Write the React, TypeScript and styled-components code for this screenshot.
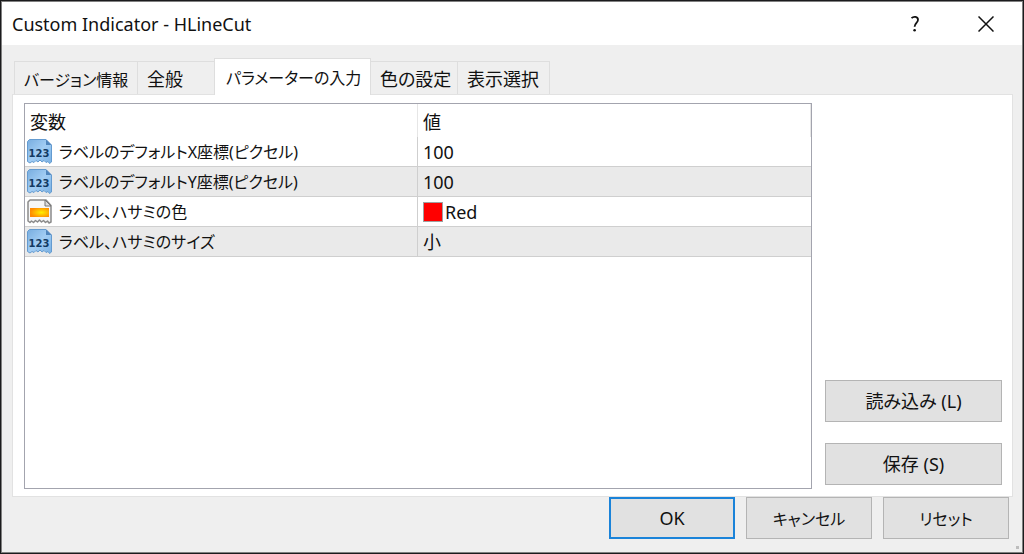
import React, { useState } from "react";
import styled, { createGlobalStyle } from "styled-components";

const GlobalStyle = createGlobalStyle`
  *, *::before, *::after { box-sizing: border-box; }
  html, body { margin: 0; padding: 0; }
  body, button {
    font-family: "Noto Sans", "Noto Sans CJK JP", sans-serif;
    font-size: 18px;
    line-height: 24px;
    font-feature-settings: "palt";
    color: #111;
  }
`;

const Dialog = styled.main`
  display: flex;
  flex-direction: column;
  min-height: 100vh;
  padding: 1px;
  background: #efefef;
  border: 1px solid #1b1b1d;
  outline: 1px solid #808080;
  outline-offset: -2px;
`;

const TitleBar = styled.header`
  display: flex;
  align-items: center;
  height: 43px;
  padding: 0 1px 0 10px;
  background: #fff;
`;

const Title = styled.h1`
  flex: 1;
  margin: 0;
  font-size: 18px;
  font-weight: 400;
`;

const CaptionButton = styled.button`
  display: flex;
  align-items: center;
  justify-content: center;
  width: 71px;
  height: 43px;
  padding: 0;
  border: 0;
  background: none;
`;

const Body = styled.div`
  display: flex;
  flex: 1;
  flex-direction: column;
  padding: 13px 9px 0 10px;
`;

const TabList = styled.div`
  display: flex;
  align-items: flex-end;
  height: 36px;
  padding-left: 2px;
`;

const Label = styled.span<{ $kana: boolean }>`
  font-size: ${(p) => (p.$kana ? 16 : 18)}px;
`;

const Tab = styled.button<{ $active: boolean; $width: number }>`
  position: relative;
  z-index: ${(p) => (p.$active ? 1 : 0)};
  flex: none;
  width: ${(p) => p.$width}px;
  height: ${(p) => (p.$active ? 37 : 33)}px;
  margin: 0 0 ${(p) => (p.$active ? -1 : 0)}px -1px;
  padding: ${(p) => (p.$active ? "0 11px" : "2px 9px 0")};
  text-align: left;
  white-space: nowrap;
  border: 1px solid #dedede;
  border-bottom: 0;
  background: ${(p) => (p.$active ? "#fff" : "#efefef")};
  &:first-child { margin-left: 0; }
`;

const Panel = styled.section`
  display: flex;
  flex: 1;
  gap: 13px;
  padding: 8px 10px 7px 11px;
  border: 1px solid #e2e2e2;
  background: #fff;
`;

const ListBox = styled.div`
  flex: 1;
  border: 1px solid #a3a4ae;
`;

const Table = styled.table`
  width: 100%;
  table-layout: fixed;
  border-collapse: separate;
  border-spacing: 0;
`;

const HeadCell = styled.th`
  height: 33px;
  padding: 2px 5px 0;
  font-weight: 400;
  text-align: left;
  border-right: 1px solid #e6e6e6;
`;

const Row = styled.tr`
  &:nth-child(even) { background: #eaeaea; }
`;

const Cell = styled.td`
  height: 30px;
  padding: 0 5px;
  border-bottom: 1px solid #cfcfcf;
  &:first-child {
    padding: 0 1px;
    border-right: 1px solid #cfcfcf;
  }
`;

const CellContent = styled.div<{ $gap: number }>`
  display: flex;
  align-items: center;
  gap: ${(p) => p.$gap}px;
  height: 29px;
  white-space: nowrap;
`;

const Swatch = styled.span`
  width: 20px;
  height: 20px;
  border: 1px solid #a0a0a0;
  background: #f00;
`;

const SideActions = styled.div`
  display: flex;
  flex-direction: column;
  justify-content: flex-end;
  gap: 21px;
  width: 177px;
  padding-bottom: 4px;
`;

const PushButton = styled.button<{ $primary?: boolean }>`
  height: 42px;
  padding: 0;
  border: ${(p) => (p.$primary ? "2px solid #1a83d9" : "1px solid #b4b4b4")};
  background: #e1e1e1;
`;

const Footer = styled.footer`
  display: flex;
  justify-content: flex-end;
  gap: 11px;
  padding: 0 4px 13px 0;
  ${PushButton} { width: 126px; }
`;

const Grip = styled.span`
  position: absolute;
  right: 5px;
  bottom: 5px;
  width: 3px;
  height: 3px;
  background: #bdbdbd;
`;

const Frame = styled.div`
  position: relative;
`;

const NumberIcon = () => (
  <svg width="28" height="27" viewBox="0 0 28 27" aria-hidden="true">
    <defs>
      <linearGradient id="blue" x1="0" y1="0" x2="1" y2="1">
        <stop offset="0" stopColor="#78addf" />
        <stop offset=".5" stopColor="#a2cdf4" />
        <stop offset="1" stopColor="#78b0e2" />
      </linearGradient>
    </defs>
    <path
      d="M3.5 1.5H20L25.5 7V24L23.5 25.5 22 23.5 20 24.5 18 22.5 16 24 14 22 12 24 10 22.5 8 24.5 6 23.5 4 25 1.5 23.5V3.5Z"
      fill="url(#blue)"
      stroke="#649bd0"
      strokeLinejoin="round"
    />
    <path d="M20 1.5V7H25.5Z" fill="#5186bd" />
    <text x="13" y="19" textAnchor="middle" fontFamily="DejaVu Sans" fontWeight="700" fontSize="10" fill="#123a63">
      123
    </text>
  </svg>
);

const ColorIcon = () => (
  <svg width="28" height="27" viewBox="0 0 28 27" aria-hidden="true">
    <defs>
      <radialGradient id="glow" cx=".6" cy=".5" r=".6">
        <stop offset="0" stopColor="#fff000" />
        <stop offset="1" stopColor="#ff8a00" />
      </radialGradient>
    </defs>
    <path
      d="M4 2H20L25 7.5V24L23 25 21.5 23 19.5 24.5 17.5 22.5 15.5 24 13.5 22 11.5 24 9.5 22.5 7.5 24.5 5.5 23 4 24.5 2 23V4Z"
      fill="#f6f6f6"
      stroke="#8a8a8a"
      strokeWidth="1.5"
      strokeLinejoin="round"
    />
    <path d="M19 2V8H25Z" fill="#ddd" stroke="#777" strokeLinejoin="round" />
    <rect x="4" y="10" width="19" height="9" fill="url(#glow)" />
  </svg>
);

const tabs = [
  { label: "バージョン情報", width: 124, kana: true },
  { label: "全般", width: 78, kana: false },
  { label: "パラメーターの入力", width: 157, kana: true },
  { label: "色の設定", width: 88, kana: false },
  { label: "表示選択", width: 93, kana: false },
];

const rows = [
  { name: "ラベルのデフォルトX座標(ピクセル)", value: "100", kind: "number" },
  { name: "ラベルのデフォルトY座標(ピクセル)", value: "100", kind: "number" },
  { name: "ラベル、ハサミの色", value: "Red", kind: "color" },
  { name: "ラベル、ハサミのサイズ", value: "小", kind: "number" },
];

export default function App() {
  const [active, setActive] = useState(2);
  return (
    <Frame>
      <GlobalStyle />
      <Dialog>
        <TitleBar>
          <Title>Custom Indicator - HLineCut</Title>
          <CaptionButton aria-label="Help">
            <svg width="10" height="18" viewBox="0 0 10 18" fill="none" stroke="#111" strokeWidth="1.8">
              <path d="M1.5 3.2C3.5 1.2 8 1.4 8 4.8 8 7.8 4.6 8 4.6 11.8" />
              <circle cx="4.6" cy="15.3" r="1.3" fill="#111" stroke="none" />
            </svg>
          </CaptionButton>
          <CaptionButton aria-label="Close">
            <svg width="16" height="16" viewBox="0 0 16 16" stroke="#111" strokeWidth="1.5">
              <path d="M.5.5l15 15M15.5.5l-15 15" />
            </svg>
          </CaptionButton>
        </TitleBar>
        <Body>
          <TabList role="tablist">
            {tabs.map((t, i) => (
              <Tab
                key={t.label}
                role="tab"
                aria-selected={i === active}
                $active={i === active}
                $width={t.width}
                onClick={() => setActive(i)}
              >
                <Label $kana={t.kana}>{t.label}</Label>
              </Tab>
            ))}
          </TabList>
          <Panel role="tabpanel">
            <ListBox>
              <Table>
                <thead>
                  <tr>
                    <HeadCell>変数</HeadCell>
                    <HeadCell>値</HeadCell>
                  </tr>
                </thead>
                <tbody>
                  {rows.map((r) => (
                    <Row key={r.name}>
                      <Cell>
                        <CellContent $gap={5}>
                          {r.kind === "color" ? <ColorIcon /> : <NumberIcon />}
                          <Label $kana>{r.name}</Label>
                        </CellContent>
                      </Cell>
                      <Cell>
                        <CellContent $gap={2}>
                          {r.kind === "color" && <Swatch />}
                          {r.value}
                        </CellContent>
                      </Cell>
                    </Row>
                  ))}
                </tbody>
              </Table>
            </ListBox>
            <SideActions>
              <PushButton>読み込み (L)</PushButton>
              <PushButton>保存 (S)</PushButton>
            </SideActions>
          </Panel>
          <Footer>
            <PushButton $primary>OK</PushButton>
            <PushButton>
              <Label $kana>キャンセル</Label>
            </PushButton>
            <PushButton>
              <Label $kana>リセット</Label>
            </PushButton>
          </Footer>
        </Body>
      </Dialog>
      <Grip />
    </Frame>
  );
}
